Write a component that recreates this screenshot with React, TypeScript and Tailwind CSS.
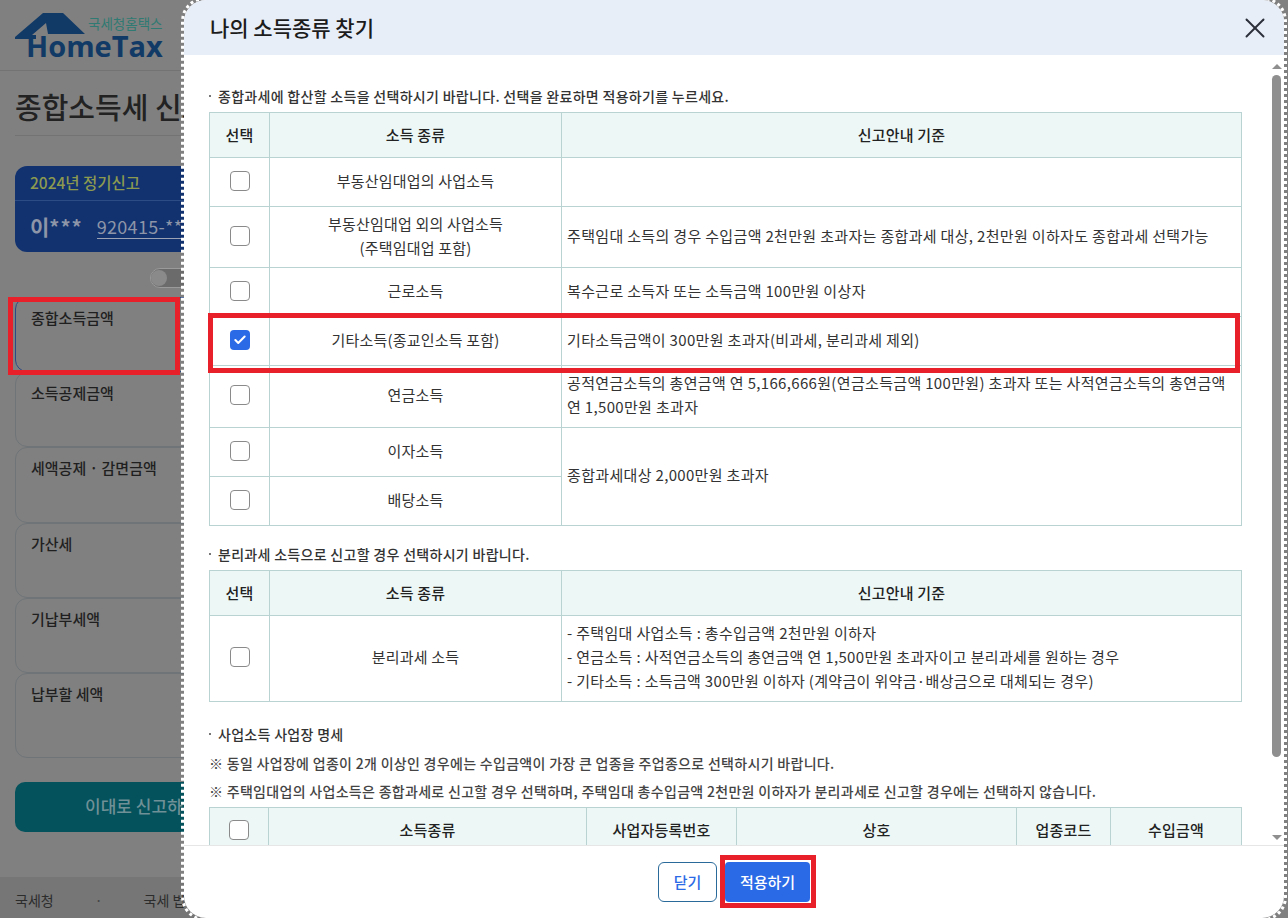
import { Check, X } from 'lucide-react'

const font = { fontFamily: '"Noto Sans CJK KR", "Noto Sans", sans-serif' }

const sideCards = [
  { label: '종합소득금액', h: 'h-[75px]', active: true },
  { label: '소득공제금액', h: 'h-[75px]' },
  { label: '세액공제 · 감면금액', h: 'h-[76px]' },
  { label: '가산세', h: 'h-[75px]' },
  { label: '기납부세액', h: 'h-[75px]' },
  { label: '납부할 세액', h: 'h-[85px]' },
]

function Box({ checked = false }: { checked?: boolean }) {
  if (checked) {
    return (
      <span className="mx-auto flex h-5 w-5 items-center justify-center rounded-[4px] bg-[#2b6ae6]">
        <Check className="h-3.5 w-3.5 text-white" strokeWidth={3.5} />
      </span>
    )
  }
  return <span className="mx-auto block h-5 w-5 rounded-[4px] border border-[#8a8a8a] bg-white" />
}

function Bullet({ children }: { children: React.ReactNode }) {
  return (
    <div className="flex items-center gap-[7px] text-[14px] leading-[18px] font-medium tracking-[0.3px] text-[#333]">
      <span className="h-[2px] w-[2px] bg-[#777]" />
      {children}
    </div>
  )
}

function Logo() {
  return (
    <div className="relative h-[70px] w-[170px]">
      <svg className="absolute top-[13px] left-[15px]" width="72" height="28" viewBox="0 0 72 28">
        <path d="M0 24 L28 0 H48 L70 21 H33 L31 10 L17 22 H21 V26 H0 Z" fill="#123a66" />
      </svg>
      <span className="absolute top-[14px] left-[88px] text-[13.5px] leading-[18px] whitespace-nowrap text-[#2f7a72]">국세청홈택스</span>
      <span className="absolute top-[36px] left-[26px] font-['Open_Sans'] text-[29px] leading-[20px] font-bold text-[#123a66]">
        HomeTax
      </span>
    </div>
  )
}

function Page() {
  return (
    <div className="h-[918px] w-[400px] overflow-hidden">
      <div className="h-[71px] border-b border-[#737373]">
        <Logo />
      </div>
      <div className="px-[15px]">
        <div className="h-[65px] border-b border-[#737373] pt-[14px] text-[29px] leading-[42px] font-medium whitespace-nowrap text-[#222]">
          종합소득세 신고
        </div>
        <div className="mt-[30px] h-[86px] rounded-[12px] bg-[#12326f]">
          <div className="h-[35px] border-b border-[#2b4c85] pl-[15px] text-[15.5px] leading-[33px] font-medium text-[#8c9a50]">
            2024년 정기신고
          </div>
          <div className="flex items-center gap-[14px] pt-[13px] pl-[15px] whitespace-nowrap text-[#8d95a8]">
            <span className="text-[21px] leading-[24px] font-bold">이<span className="text-[20px] tracking-[1px]">***</span></span>
            <span className="border-b border-[#9aa2b4] text-[18px] leading-[24px] tracking-[0.3px]">920415-***</span>
          </div>
        </div>
        <div className="mt-[16px] flex h-[29px] justify-start pl-[135px]">
          <span className="flex h-5 w-10 items-center rounded-full border border-[#9a9a9a] bg-[#6b6b6b]">
            <span className="h-4 w-4 rounded-full bg-[#8a8a8a]" />
          </span>
        </div>
        <div className="w-[385px]">
          {sideCards.map(c => (
            <div
              key={c.label}
              className={`${c.h} rounded-[12px] border pt-[9px] pl-[15px] text-[15px] leading-[22px] font-medium text-[#1f1f1f] ${c.active ? 'border-[#2c4a86]' : 'border-[#6f7478]'}`}
            >
              {c.label}
            </div>
          ))}
        </div>
        <div className="mt-[24px] h-[50px] w-[385px] rounded-[10px] bg-[#03525c] pl-[70px] text-[17px] leading-[48px] font-medium text-[#6f9096]">
          이대로 신고하기
        </div>
      </div>
      <div className="mt-[45px] flex h-[41px] items-center bg-[#767676] px-[15px] pt-[6px] text-[14px] whitespace-nowrap text-[#2c2c2c]">
        <span>국세청</span>
        <span className="ml-[41px] text-[#444]">·</span>
        <span className="ml-[41px]">국세 법령정보</span>
      </div>
    </div>
  )
}

const th = 'border border-[#b9d2d2] bg-[#ecf7f6] text-center text-[15px] font-medium tracking-[0.2px] text-[#222]'
const td = 'border border-[#b9d2d2] pb-[3px] text-center text-[15px] leading-[24px] tracking-[0.2px] text-[#333]'
const tdLeft = 'border border-[#b9d2d2] px-[5px] pb-[3px] text-left text-[15px] leading-[24px] tracking-[0.33px] text-[#333]'

function MainTable() {
  return (
    <table className="w-[1033px] table-fixed border-collapse">
      <colgroup>
        <col className="w-[60px]" />
        <col className="w-[292px]" />
        <col />
      </colgroup>
      <thead>
        <tr className="h-[45px]">
          <th className={th}>선택</th>
          <th className={th}>소득 종류</th>
          <th className={th}>신고안내 기준</th>
        </tr>
      </thead>
      <tbody>
        <tr className="h-[49px]">
          <td className={td}><Box /></td>
          <td className={td}>부동산임대업의 사업소득</td>
          <td className={tdLeft}></td>
        </tr>
        <tr className="h-[61px]">
          <td className={td}><Box /></td>
          <td className={td}>부동산임대업 외의 사업소득<br />(주택임대업 포함)</td>
          <td className={tdLeft}>주택임대 소득의 경우 수입금액 2천만원 초과자는 종합과세 대상, 2천만원 이하자도 종합과세 선택가능</td>
        </tr>
        <tr className="h-[49px]">
          <td className={td}><Box /></td>
          <td className={td}>근로소득</td>
          <td className={tdLeft}>복수근로 소득자 또는 소득금액 100만원 이상자</td>
        </tr>
        <tr className="h-[49px]">
          <td className={td}><Box checked /></td>
          <td className={td}>기타소득(종교인소득 포함)</td>
          <td className={tdLeft}>기타소득금액이 300만원 초과자(비과세, 분리과세 제외)</td>
        </tr>
        <tr className="h-[62px]">
          <td className={td}><Box /></td>
          <td className={td}>연금소득</td>
          <td className={tdLeft}>공적연금소득의 총연금액 연 5,166,666원(연금소득금액 100만원) 초과자 또는 사적연금소득의 총연금액<br />연 1,500만원 초과자</td>
        </tr>
        <tr className="h-[49px]">
          <td className={td}><Box /></td>
          <td className={td}>이자소득</td>
          <td className={tdLeft} rowSpan={2}>종합과세대상 2,000만원 초과자</td>
        </tr>
        <tr className="h-[49px]">
          <td className={td}><Box /></td>
          <td className={td}>배당소득</td>
        </tr>
      </tbody>
    </table>
  )
}

function SeparateTable() {
  return (
    <table className="w-[1033px] table-fixed border-collapse">
      <colgroup>
        <col className="w-[60px]" />
        <col className="w-[292px]" />
        <col />
      </colgroup>
      <thead>
        <tr className="h-[45px]">
          <th className={th}>선택</th>
          <th className={th}>소득 종류</th>
          <th className={th}>신고안내 기준</th>
        </tr>
      </thead>
      <tbody>
        <tr className="h-[86px]">
          <td className={td}><Box /></td>
          <td className={td}>분리과세 소득</td>
          <td className={tdLeft}>
            - 주택임대 사업소득 : 총수입금액 2천만원 이하자<br />
            - 연금소득 : 사적연금소득의 총연금액 연 1,500만원 초과자이고 분리과세를 원하는 경우<br />
            - 기타소득 : 소득금액 300만원 이하자 (계약금이 위약금·배상금으로 대체되는 경우)
          </td>
        </tr>
      </tbody>
    </table>
  )
}

function BusinessTable() {
  return (
    <table className="w-[1033px] table-fixed border-collapse">
      <colgroup>
        <col className="w-[59px]" />
        <col className="w-[318px]" />
        <col className="w-[150px]" />
        <col className="w-[280px]" />
        <col className="w-[94px]" />
        <col />
      </colgroup>
      <thead>
        <tr className="h-[45px]">
          <th className={th}><Box /></th>
          <th className={th}>소득종류</th>
          <th className={th}>사업자등록번호</th>
          <th className={th}>상호</th>
          <th className={th}>업종코드</th>
          <th className={th}>수입금액</th>
        </tr>
      </thead>
    </table>
  )
}

function Modal() {
  return (
    <div className="absolute top-[-3px] left-[181px] h-[924px] w-[1106px] rounded-[24px] border-[3px] border-dotted border-white">
      <div className="flex h-full w-full flex-col overflow-hidden rounded-[22px] bg-white">
        <div className="flex h-[55px] shrink-0 items-center justify-between bg-[#e8eef8] pr-[12px] pl-[26px]">
          <h2 className="text-[21px] font-medium text-[#1c1c1c]">나의 소득종류 찾기</h2>
          <X className="h-[34px] w-[34px] text-[#2a2f3a]" strokeWidth={1.35} />
        </div>
        <div className="relative min-h-0 flex-1 overflow-hidden pt-[32px] pl-[25px]">
          <Bullet>종합과세에 합산할 소득을 선택하시기 바랍니다. 선택을 완료하면 적용하기를 누르세요.</Bullet>
          <div className="mt-[7px]"><MainTable /></div>
          <div className="mt-[19px]"><Bullet>분리과세 소득으로 신고할 경우 선택하시기 바랍니다.</Bullet></div>
          <div className="mt-[7px]"><SeparateTable /></div>
          <div className="mt-[23px]"><Bullet>사업소득 사업장 명세</Bullet></div>
          <div className="mt-[11px] text-[14px] leading-[19px] font-medium tracking-[0.3px] text-[#444]">※ 동일 사업장에 업종이 2개 이상인 경우에는 수입금액이 가장 큰 업종을 주업종으로 선택하시기 바랍니다.</div>
          <div className="mt-[9px] text-[14px] leading-[19px] font-medium tracking-[0.3px] text-[#444]">※ 주택임대업의 사업소득은 종합과세로 신고할 경우 선택하며, 주택임대 총수입금액 2천만원 이하자가 분리과세로 신고할 경우에는 선택하지 않습니다.</div>
          <div className="mt-[6px]"><BusinessTable /></div>
          {/* scrollbar */}
          <div className="absolute top-[9px] right-[3px] bottom-[5px] flex w-[9px] flex-col items-center">
            <span className="h-0 w-0 border-x-[5px] border-b-[5px] border-x-transparent border-b-[#8f8f8f]" />
            <span className="mt-[6px] h-[682px] w-[9px] rounded-full bg-[#8f8f8f]" />
            <span className="mt-auto h-0 w-0 border-x-[5px] border-t-[5px] border-x-transparent border-t-[#8f8f8f]" />
          </div>
        </div>
        <div className="flex h-[73px] shrink-0 items-start justify-center gap-[8px] border-t border-[#e6e6e6] pt-[16px]">
          <button className="h-[40px] w-[59px] rounded-[6px] border border-[#2a6a9a] bg-white text-[15px] font-medium text-[#2b6ae6]">닫기</button>
          <button className="h-[40px] w-[85px] rounded-[4px] bg-[#2b6ae6] text-[15px] font-medium text-white">적용하기</button>
        </div>
      </div>
    </div>
  )
}

export default function App() {
  return (
    <div className="relative h-[918px] w-[1288px] overflow-hidden bg-[#808080]" style={font}>
      <Page />
      <Modal />
      {/* 강조 표시 */}
      <div className="absolute top-[297px] left-[8px] h-[78px] w-[172px] border-[5px] border-[#e8202a]" />
      <div className="absolute top-[313px] left-[208px] h-[60px] w-[1032px] border-[5px] border-[#e8202a]" />
      <div className="absolute top-[855px] left-[720px] h-[53px] w-[96px] border-[5px] border-[#e8202a]" />
    </div>
  )
}
